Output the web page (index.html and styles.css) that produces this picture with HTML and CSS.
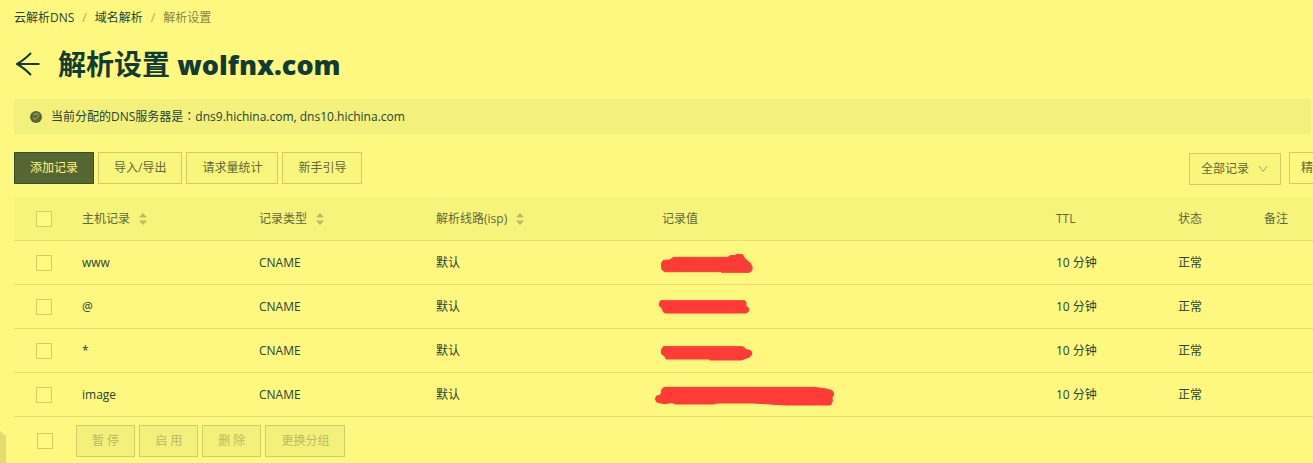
FILE: index.html
```
<!DOCTYPE html>
<html lang="zh-CN">
<head>
    <meta charset="utf-8">
    <title>解析设置</title>
    <link rel="stylesheet" href="styles.css">
</head>
<body>
    <nav class="breadcrumb">
        <a href="#">云解析DNS</a>
        <span class="separator">/</span>
        <a href="#">域名解析</a>
        <span class="separator">/</span>
        <span class="current">解析设置</span>
    </nav>

    <header class="title">
        <a href="#" class="back" aria-label="返回">
            <svg width="24" height="24" viewBox="0 0 24 24"><path d="M23.500 12H1M15 1C11 5 6.500 9 1 12C6.500 15 11 19 15 23"/></svg>
        </a>
        <h1>解析设置 <span class="domain">wolfnx.com</span></h1>
    </header>

    <div class="notice">
        <svg width="12" height="12" viewBox="0 0 12 12">
            <circle cx="6" cy="6" r="6" fill="#5c6634"/>
            <path d="M3 6.500L5.200 8.500L9 4.500M3.500 4Q6 1.500 8.500 3.500" fill="none" stroke="#b9b962"/>
        </svg>
        <span>当前分配的DNS服务器是<span class="colon" lang="zh-TW">：</span>dns9.hichina.com, dns10.hichina.com</span>
    </div>

    <div class="toolbar">
        <div class="buttons">
            <button class="btn primary">添加记录</button>
            <button class="btn">导入/导出</button>
            <button class="btn">请求量统计</button>
            <button class="btn">新手引导</button>
        </div>
        <div class="filters">
            <div class="select">
                <select aria-label="记录范围"><option>全部记录</option></select>
                <svg width="10" height="8" viewBox="0 0 10 8"><path d="M1 1L5 6.500L9 1"/></svg>
            </div>
            <select class="match" aria-label="搜索方式"><option>精</option></select>
        </div>
    </div>

    <table class="records">
        <colgroup>
            <col class="col-check"><col class="col-host"><col class="col-type"><col class="col-line">
            <col><col class="col-ttl"><col class="col-status"><col class="col-remark">
        </colgroup>
        <thead>
            <tr>
                <th class="check"><input type="checkbox" aria-label="全选"></th>
                <th>主机记录<svg class="sort" width="8" height="12" viewBox="0 0 8 12"><path d="M0 4.500L4 0L8 4.500ZM0 7.500L4 12L8 7.500Z"/></svg></th>
                <th>记录类型<svg class="sort" width="8" height="12" viewBox="0 0 8 12"><path d="M0 4.500L4 0L8 4.500ZM0 7.500L4 12L8 7.500Z"/></svg></th>
                <th>解析线路(isp)<svg class="sort" width="8" height="12" viewBox="0 0 8 12"><path d="M0 4.500L4 0L8 4.500ZM0 7.500L4 12L8 7.500Z"/></svg></th>
                <th>记录值</th>
                <th>TTL</th>
                <th>状态</th>
                <th>备注</th>
            </tr>
        </thead>
        <tbody>
            <tr>
                <td class="check"><input type="checkbox" aria-label="www"></td>
                <td>www</td>
                <td>CNAME</td>
                <td>默认</td>
                <td class="value"><svg width="180" height="43" viewBox="0 0 540 129"><path d="M22 68L28 58L48 57L58 49H222L228 44L244 43L250 40L266 41L270 50L290 68L295 80L293 89L286 94H202L200 92H32L24 86Z"/></svg></td>
                <td>10 分钟</td>
                <td>正常</td>
                <td></td>
            </tr>
            <tr>
                <td class="check"><input type="checkbox" aria-label="@"></td>
                <td>@</td>
                <td>CNAME</td>
                <td>默认</td>
                <td class="value"><svg width="180" height="43" viewBox="0 0 540 129"><path d="M16 55L20 47H272L276 53V64L284 70L283 80L276 84H34L28 80L24 69L16 63Z"/></svg></td>
                <td>10 分钟</td>
                <td>正常</td>
                <td></td>
            </tr>
            <tr>
                <td class="check"><input type="checkbox" aria-label="*"></td>
                <td>*</td>
                <td>CNAME</td>
                <td>默认</td>
                <td class="value"><svg width="180" height="43" viewBox="0 0 540 129"><path d="M22 63L28 53H266L278 62L290 65L294 74L288 83L262 93H168L166 90H36L32 81L23 75Z"/></svg></td>
                <td>10 分钟</td>
                <td>正常</td>
                <td></td>
            </tr>
            <tr>
                <td class="check"><input type="checkbox" aria-label="image"></td>
                <td>image</td>
                <td>CNAME</td>
                <td>默认</td>
                <td class="value"><svg width="180" height="43" viewBox="0 0 540 129"><path d="M4 77L8 69L20 66L24 49L30 43H478L518 48L534 53L540 64L534 73L535 85L530 96H394L298 90H190L178 93H66L54 89L30 92L8 87Z"/></svg></td>
                <td>10 分钟</td>
                <td>正常</td>
                <td></td>
            </tr>
        </tbody>
    </table>

    <div class="batch">
        <input type="checkbox" aria-label="选择全部记录">
        <div class="buttons">
            <button class="btn" disabled>暂 停</button>
            <button class="btn" disabled>启 用</button>
            <button class="btn" disabled>删 除</button>
            <button class="btn" disabled>更换分组</button>
        </div>
    </div>

    <div class="side-tab"></div>
</body>
</html>
```
FILE: styles.css
```
* {
    box-sizing: border-box;
}
body {
    margin: 0;
    padding: 8px 0 0 14px;
    background-color: #fff880;
    color: #24453a;
    font-family: "Open Sans", "Noto Sans CJK SC", sans-serif;
    font-size: 12px;
    line-height: 20px;
}
a {
    color: #24453a;
    text-decoration: none;
}
button, select {
    font: inherit;
}
.breadcrumb {
    display: flex;
    gap: 8px;
}
.separator {
    color: #a9a75b;
}
.current {
    color: #83854b;
}
.title {
    display: flex;
    align-items: center;
    gap: 18px;
    height: 40px;
    margin-top: 16px;
    padding-left: 2px;
}
.back {
    display: flex;
}
.back path {
    fill: none;
    stroke: #123b32;
    stroke-width: 2;
}
h1 {
    margin: 0;
    color: #123b32;
    font-size: 28px;
    line-height: 40px;
    font-weight: 700;
}
.domain {
    font-size: 27px;
    font-weight: 800;
}

/* DNS server notice */
.notice {
    display: flex;
    align-items: center;
    gap: 9px;
    height: 35px;
    margin: 15px 2px 18px 0;
    padding-left: 16px;
    background-color: #f3f07b;
}
.colon {
    font-family: "Noto Sans CJK TC", sans-serif;
}

/* Buttons and filters above the table */
.toolbar {
    display: flex;
    justify-content: space-between;
}
.buttons {
    display: flex;
    gap: 4px;
}
.btn {
    height: 32px;
    padding: 0 15px;
    border: 1px solid #cfcc69;
    background-color: #faf57c;
    color: #5c6b3e;
    white-space: nowrap;
}
.btn.primary {
    border-color: #34502f;
    background-color: #566632;
    color: #fff880;
}
.btn:disabled {
    background-color: #f3f07b;
    color: #bdba61;
}
.filters {
    display: flex;
    gap: 8px;
}
.select {
    display: grid;
    align-items: center;
    margin-top: 1px;
}
.select select, .select svg {
    grid-area: 1 / 1;
}
.select svg {
    justify-self: end;
    margin-right: 13px;
    pointer-events: none;
    fill: none;
    stroke: #a9a75b;
}
select {
    appearance: none;
    width: 92px;
    height: 32px;
    padding: 0 11px;
    border: 1px solid #cfcc69;
    border-radius: 0;
    background-color: #faf57c;
    color: #5c6b3e;
}
.match {
    width: 24px;
    padding-right: 0;
    border-right: 0;
    background-color: #fff880;
}

/* Records table */
.records {
    width: 100%;
    margin-top: 12px;
    border-collapse: separate;
    border-spacing: 0;
    table-layout: fixed;
}
.col-check {
    width: 52px;
}
.col-host, .col-type {
    width: 177px;
}
.col-line {
    width: 226px;
}
.col-ttl {
    width: 122px;
}
.col-status {
    width: 86px;
}
.col-remark {
    width: 65px;
}
th, td {
    height: 44px;
    padding: 0 16px;
    border-bottom: 1px solid #e5df72;
    text-align: left;
    white-space: nowrap;
}
th {
    background-color: #f7f37b;
    color: #5c6b3e;
    font-weight: 400;
}
.check {
    padding: 0 0 0 22px;
}
input[type="checkbox"] {
    display: block;
    appearance: none;
    width: 16px;
    height: 16px;
    margin: 0;
    border: 1px solid #cfcc69;
    background-color: #fff97f;
}
.sort {
    margin-left: 9px;
    vertical-align: middle;
    fill: #bdba61;
}
.value {
    padding: 0 0 0 8px;
}
.value svg {
    display: block;
    fill: #ff3b38;
    stroke: #ff3b38;
    stroke-width: 3;
    stroke-linejoin: round;
}
.batch {
    display: flex;
    align-items: center;
    gap: 23px;
    padding: 8px 0 6px 23px;
}

/* Handle of the collapsed side menu */
.side-tab {
    position: absolute;
    left: 0;
    bottom: 0;
    width: 6px;
    height: 32px;
    background-color: #e2dd71;
    clip-path: polygon(0 0, 100% 5px, 100% 100%, 0 100%);
}
```
